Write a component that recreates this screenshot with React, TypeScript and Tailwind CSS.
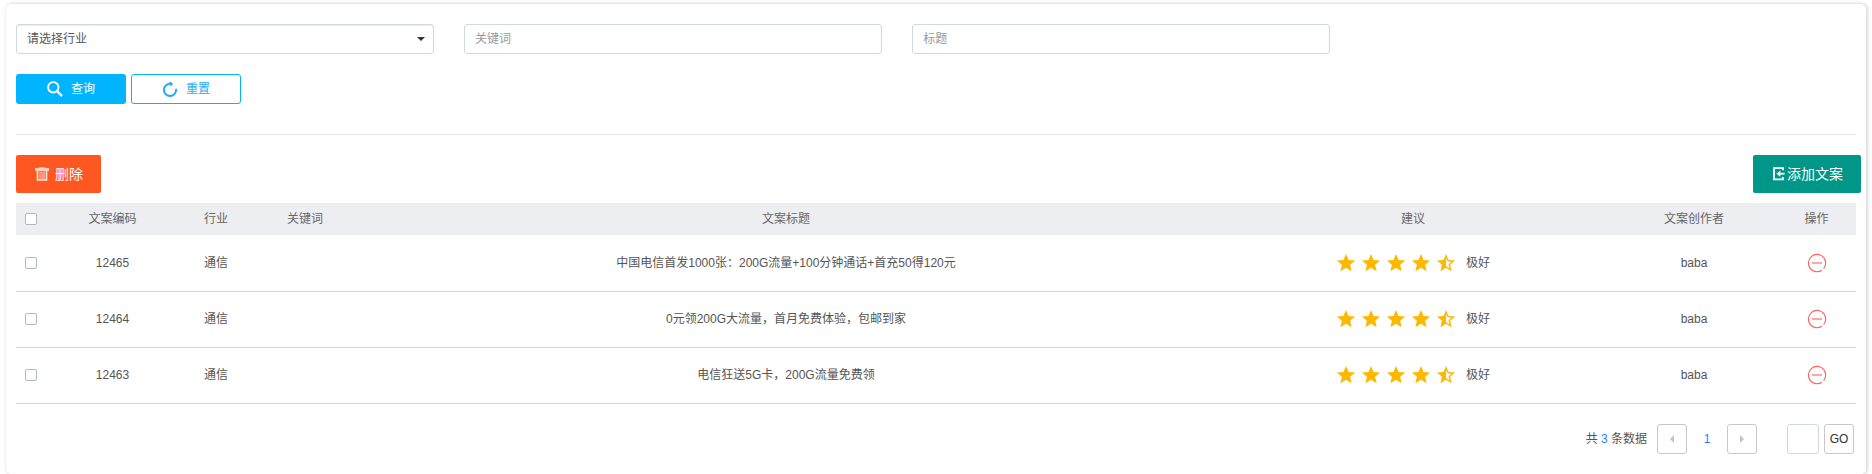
import React from "react";

type Row = { id: string; industry: string; keyword: string; title: string; author: string };

const rows: Row[] = [
  { id: "12465", industry: "通信", keyword: "", title: "中国电信首发1000张：200G流量+100分钟通话+首充50得120元", author: "baba" },
  { id: "12464", industry: "通信", keyword: "", title: "0元领200G大流量，首月免费体验，包邮到家", author: "baba" },
  { id: "12463", industry: "通信", keyword: "", title: "电信狂送5G卡，200G流量免费领", author: "baba" },
];

const STAR = "M12 17.27 18.18 21 16.55 13.97 22 9.24 14.81 8.63 12 2 9.19 8.63 2 9.24 7.46 13.97 5.82 21Z";
const STAR_HOLE = "M12 15.4V6.1L13.71 10.14 18.09 10.52 14.77 13.4 15.77 17.68Z";

function Star({ half = false }: { half?: boolean }) {
  return (
    <svg viewBox="1 1 22 22" className="h-5 w-5 text-[#ffb800]" aria-hidden="true">
      <path d={half ? `${STAR}${STAR_HOLE}` : STAR} fill="currentColor" fillRule="evenodd" />
    </svg>
  );
}

function SearchIcon() {
  return (
    <svg viewBox="0 0 16 16" className="h-4 w-4" fill="none" stroke="currentColor" aria-hidden="true">
      <circle cx="6.3" cy="6.3" r="5.2" strokeWidth="1.9" />
      <path d="m10.2 10.2 4.9 4.9" strokeWidth="2.3" />
    </svg>
  );
}

function ResetIcon() {
  return (
    <svg viewBox="0 0 16 16" className="h-4 w-4" fill="none" aria-hidden="true">
      <path d="M8.8 2.8A6.1 6.1 0 1 0 14 7.8" stroke="currentColor" strokeWidth="1.9" />
      <path d="M7.4.2 11.2 2.8 8.6 5.4Z" fill="currentColor" />
    </svg>
  );
}

function TrashIcon() {
  return (
    <svg viewBox="0 0 16 16" className="h-4 w-4" fill="none" stroke="currentColor" aria-hidden="true">
      <path d="M1 3.5h14" strokeWidth="3" strokeOpacity=".7" />
      <path d="M4.8 1.7h6.4" strokeWidth="1.2" strokeOpacity=".6" />
      <path d="M3.5 5V14h9V5" strokeWidth="1.6" strokeOpacity=".85" />
      <path d="M6 5.5v8M8 5.5v8M10 5.5v8" strokeWidth="1.2" strokeOpacity=".65" />
    </svg>
  );
}

function ImportIcon() {
  return (
    <svg viewBox="0 0 16 16" className="h-4 w-4" fill="none" stroke="currentColor" aria-hidden="true">
      <path d="M12 4.3V2.1H3v11.2h9v-2.2" strokeWidth="1.8" />
      <path d="M8 7.7h5.6" strokeWidth="1.8" />
      <path d="M5.4 7.7 9.4 4.6v6.2Z" fill="currentColor" stroke="none" />
    </svg>
  );
}

function RemoveIcon() {
  return (
    <svg viewBox="0 0 20 20" className="h-5 w-5" fill="none" stroke="currentColor" aria-hidden="true">
      <path d="M14.8 17.2A8.6 8.6 0 1 1 16.6 15.6" strokeWidth="1.1" />
      <path d="M5 10h10" strokeWidth="1.1" />
    </svg>
  );
}

const fieldClass =
  "h-[30px] w-full rounded-[3px] border border-[#ccdcdc] bg-white px-[10px] text-[#555] outline-none placeholder:text-[#999]";
const checkClass = "block h-3 w-3 appearance-none rounded-[2px] border border-[#b0b8be] bg-white checked:bg-[#00b4ff]";
const pagerClass = "flex h-[30px] w-[30px] items-center justify-center rounded-[3px] border border-[#c8c8c8] bg-white";

export default function App() {
  return (
    <div className="bg-white px-[6px] pt-1 font-['Liberation_Sans','Noto_Sans_CJK_SC',sans-serif] text-xs text-[#555]">
      <main className="rounded-[5px] bg-white px-[10px] py-5 shadow-[1px_0px_3px_1px_rgba(0,0,0,0.14)]">
        <form onSubmit={(e) => e.preventDefault()}>
          <div className="grid w-5/7 grid-cols-3 gap-[30px]">
            <div className="relative">
              <select aria-label="请选择行业" className={`${fieldClass} appearance-none shadow-[inset_0_1px_1px_rgba(0,0,0,0.08)]`}>
                <option>请选择行业</option>
                <option>通信</option>
              </select>
              <svg viewBox="0 0 8 4" className="pointer-events-none absolute top-[13px] right-[9px] h-1 w-2" aria-hidden="true">
                <path d="M0 0h8L4 4Z" fill="#333" />
              </svg>
            </div>
            <input aria-label="关键词" placeholder="关键词" className={fieldClass} />
            <input aria-label="标题" placeholder="标题" className={fieldClass} />
          </div>
          <div className="mt-5 flex gap-[5px]">
            <button type="submit" className="flex h-[30px] w-[110px] items-center justify-center gap-2 rounded-[3px] bg-[#00b4ff] text-white">
              <SearchIcon />
              查询
            </button>
            <button type="reset" className="flex h-[30px] w-[110px] items-center justify-center gap-2 rounded-[3px] border border-[#00b4ff] bg-white text-[#1eaaf5]">
              <ResetIcon />
              重置
            </button>
          </div>
        </form>

        <hr className="mt-[30px] mb-5 border-t border-[#e2e2e2]" />

        <div className="-mr-[5px] flex justify-between text-sm text-white">
          <button type="button" className="flex h-[38px] items-center gap-[5px] rounded-[2px] bg-[#ff5722] px-[18px]">
            <TrashIcon />
            删除
          </button>
          <button type="button" className="flex h-[38px] items-center rounded-[2px] bg-[#009688] px-[18px]">
            <ImportIcon />
            添加文案
          </button>
        </div>

        <table className="mt-[10px] w-full table-fixed border-separate border-spacing-0 text-center">
          <colgroup>
            <col className="w-[30px]" />
            <col className="w-[133px]" />
            <col className="w-[74px]" />
            <col className="w-[104px]" />
            <col />
            <col className="w-[396px]" />
            <col className="w-[166px]" />
            <col className="w-[79px]" />
          </colgroup>
          <thead>
            <tr className="h-[33px] text-[#666] *:border-b *:border-white *:bg-[#edeef2] *:bg-clip-padding *:font-normal">
              <th className="px-[9px]">
                <input type="checkbox" aria-label="全选" className={checkClass} />
              </th>
              <th>文案编码</th>
              <th>行业</th>
              <th>关键词</th>
              <th>文案标题</th>
              <th>建议</th>
              <th>文案创作者</th>
              <th>操作</th>
            </tr>
          </thead>
          <tbody>
            {rows.map((row) => (
              <tr key={row.id} className="h-14 *:border-b *:border-[#ccd9d9] *:pb-[2px]">
                <td className="px-[9px]">
                  <input type="checkbox" aria-label={row.id} className={checkClass} />
                </td>
                <td>{row.id}</td>
                <td>{row.industry}</td>
                <td>{row.keyword}</td>
                <td>{row.title}</td>
                <td>
                  <div className="flex items-center justify-center gap-[5px]">
                    <Star />
                    <Star />
                    <Star />
                    <Star />
                    <Star half />
                    <span className="pl-[5px]">极好</span>
                  </div>
                </td>
                <td>{row.author}</td>
                <td>
                  <button type="button" aria-label="删除" className="block w-full text-[#ff5b5b]">
                    <span className="flex justify-center">
                      <RemoveIcon />
                    </span>
                  </button>
                </td>
              </tr>
            ))}
          </tbody>
        </table>

        <nav aria-label="分页" className="mt-5 flex items-center justify-end pr-[2px]">
          <span className="mr-[10px]">
            共 <span className="text-[#1e7fff]">3</span> 条数据
          </span>
          <button type="button" aria-label="上一页" className={pagerClass}>
            <svg viewBox="0 0 4 8" className="h-2 w-1" aria-hidden="true">
              <path d="M4 0v8L0 4Z" fill="#c4c4c4" />
            </svg>
          </button>
          <a href="#1" className="w-10 text-center text-[#1e7fff]">
            1
          </a>
          <button type="button" aria-label="下一页" className={pagerClass}>
            <svg viewBox="0 0 4 8" className="h-2 w-1" aria-hidden="true">
              <path d="M0 0v8l4-4Z" fill="#c4c4c4" />
            </svg>
          </button>
          <input aria-label="页码" className="mr-[5px] ml-[30px] h-[30px] w-8 rounded-[3px] border border-[#ccdcdc] bg-white px-1 text-center outline-none" />
          <button type="button" className={`${pagerClass} text-[#333]`}>
            GO
          </button>
        </nav>
      </main>
    </div>
  );
}
